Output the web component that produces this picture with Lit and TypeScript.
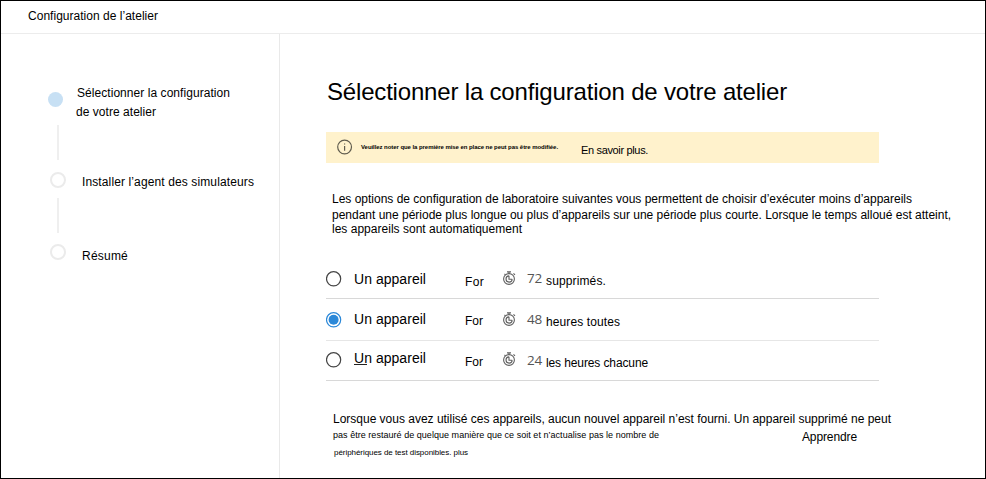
import { LitElement, html, css, svg } from "lit";
import { customElement, property, state } from "lit/decorators.js";
import { styleMap } from "lit/directives/style-map.js";

/** One line of text whose tracking is computed so that it spans `span` pixels. */
@customElement("text-line")
class TextLine extends LitElement {
  @property({ type: Number }) span = 0;
  @property() text = "";
  @state() private tracking = 0;

  static styles = css`
    :host { display: block; white-space: pre; }
    .line { display: inline-block; vertical-align: top; }
  `;

  firstUpdated() {
    const cs = getComputedStyle(this);
    const ctx = document.createElement("canvas").getContext("2d")!;
    ctx.font = `${cs.fontWeight} ${cs.fontSize} ${cs.fontFamily}`;
    const natural = ctx.measureText(this.text).width;
    if (this.span) this.tracking = (this.span - natural) / this.text.length;
  }

  render() {
    return html`<span class="line" style=${styleMap({ letterSpacing: `${this.tracking.toFixed(3)}px` })}>${this.text}</span>`;
  }
}

const stopwatch = svg`
  <path d="M4 .9h4M6 .9v2M10.5 2.4l1.5 1.5M1.5 2.8l1 1" />
  <circle cx="6" cy="8" r="5.4" />
  <path d="M6 4.8v3.4h3.2M9.2 8.2a3.1 3.1 0 1 1-3.2-3.3" />`;

interface Option {
  name: string; hours: string; unit: string; unitSpan: number; forSpan: number; checked?: boolean; cls: string;
}

const options: Option[] = [
  { name: "Un appareil", hours: "72", unit: "supprimés.", unitSpan: 60, forSpan: 19, cls: "first" },
  { name: "Un appareil", hours: "48", unit: "heures toutes", unitSpan: 74, forSpan: 18, checked: true, cls: "second" },
  { name: "Un appareil", hours: "24", unit: "les heures chacune", unitSpan: 102, forSpan: 18, cls: "third" },
];

@customElement("app-root")
class AppRoot extends LitElement {
  static styles = css`
    :host {
      display: block; box-sizing: border-box; width: 986px; height: 479px;
      border: 1px solid #000; background: #fff; color: #000; overflow: hidden;
      font: 12px/16px "Liberation Sans", Arial, sans-serif;
    }
    svg { display: block; fill: none; }
    header { box-sizing: border-box; height: 33px; padding: 7px 0 0 27px; border-bottom: 1px solid #ececec; }
    .body { display: flex; height: 444px; }
    nav { box-sizing: border-box; width: 279px; border-right: 1px solid #e9e9e9; padding: 50px 0 0 47px; }
    .step { display: flex; }
    .rail { display: flex; flex-direction: column; align-items: center; width: 20px; flex: none; }
    .dot { box-sizing: border-box; width: 16px; height: 16px; border-radius: 50%; border: 2px solid #ebebeb; }
    .dot.on { background: #c7e0f4; border: 0; width: 15px; height: 15px; margin: 8px 5px 0 0; }
    .link { width: 2px; height: 35px; background: #efefef; }
    .one { height: 88px; }
    .one .link { margin-top: 18px; }
    .one .label { margin: 1px 0 0 9px; }
    .one .label text-line + text-line { margin: 3px 0 0 -1px; }
    .two { height: 72px; }
    .two .link { margin-top: 10px; }
    .two .label { margin: 2px 0 0 14px; }
    .three .label { margin: 4px 0 0 14px; }
    main { padding: 44px 0 0 46px; width: 640px; }
    .title { font-size: 24px; line-height: 28px; margin-left: 1px; }
    .banner { box-sizing: border-box; display: flex; width: 553px; height: 31px; margin-top: 26px; padding-left: 11px; background: #fff2cc; }
    .info { margin-top: 7px; width: 16px; height: 16px; stroke: #605c4e; stroke-width: 1.2; }
    .note { font-size: 6px; font-weight: bold; line-height: 8px; margin: 11px 0 0 8px; width: 220px; }
    .more { font-size: 11px; margin-top: 10px; }
    .intro { margin: 28px 0 0 6px; }
    .intro .tight { margin-top: -2px; }
    .option { box-sizing: border-box; display: grid; grid-template-columns: 28px 111px 38px 24px 19px 1fr; width: 553px; border-bottom: 1px solid #d8d8d8; }
    .first { height: 41px; margin-top: 21px; }
    .second { height: 42px; border-color: #e6e6e6; }
    .third { height: 40px; }
    .radio { stroke: #444; stroke-width: 1.2; }
    .radio.checked { stroke: #2b88d8; }
    .core { fill: #2b88d8; stroke: none; }
    .watch { stroke: #606060; stroke-width: 1.1; }
    .name { font-size: 14px; }
    .hours { font: 13.5px/16px "Open Sans", "Noto Sans", sans-serif; color: #555; }
    .first .radio { margin-top: 13px; }
    .first .name { margin-top: 13px; }
    .first .for { margin-top: 16px; }
    .first .watch { margin-top: 13px; }
    .first .hours { margin-top: 12px; }
    .first .unit { margin-top: 15px; }
    .second .radio { margin-top: 13px; }
    .second .name { margin-top: 12px; }
    .second .for { margin-top: 14px; }
    .second .watch { margin-top: 13px; }
    .second .hours { margin-top: 12px; }
    .second .unit { margin-top: 15px; }
    .third .radio { margin-top: 11px; }
    .third .name { margin-top: 9px; }
    .third .for { margin-top: 13px; }
    .third .watch { margin-top: 11px; }
    .third .hours { margin-top: 11px; }
    .third .unit { margin-top: 14px; }
    .third .name .mark { width: 13px; height: 1px; background: #222; margin-top: -2px; }
    .outro { margin: 30px 0 0 7px; }
    .pair { display: flex; justify-content: space-between; width: 524px; height: 18px; }
    .small { font-size: 9px; }
    .apprendre { margin-top: 2px; }
    .tiny { font-size: 8px; margin-left: 1px; }
  `;

  private option(o: Option) {
    return html`
      <div class="option ${o.cls}">
        <svg class="radio ${o.checked ? "checked" : ""}" width="16" height="16">
          <circle cx="7.6" cy="7.8" r="7.1" />
          ${o.checked ? svg`<circle class="core" cx="7.6" cy="7.8" r="5" />` : ""}
        </svg>
        <div class="name"><text-line span="72" text=${o.name}></text-line>${o.cls === "third" ? html`<div class="mark"></div>` : ""}</div>
        <text-line class="for" span=${o.forSpan} text="For"></text-line>
        <svg class="watch" width="14" height="14">${stopwatch}</svg>
        <text-line class="hours" span="15" text=${o.hours}></text-line>
        <text-line class="unit" span=${o.unitSpan} text=${o.unit}></text-line>
      </div>`;
  }

  render() {
    return html`
      <header><text-line span="130" text="Configuration de l’atelier"></text-line></header>
      <div class="body">
        <nav>
          <div class="step one">
            <div class="rail"><div class="dot on"></div><div class="link"></div></div>
            <div class="label">
              <text-line span="153" text="Sélectionner la configuration"></text-line>
              <text-line span="80" text="de votre atelier"></text-line>
            </div>
          </div>
          <div class="step two">
            <div class="rail"><div class="dot"></div><div class="link"></div></div>
            <text-line class="label" span="172" text="Installer l’agent des simulateurs"></text-line>
          </div>
          <div class="step three">
            <div class="rail"><div class="dot"></div></div>
            <text-line class="label" span="46" text="Résumé"></text-line>
          </div>
        </nav>
        <main>
          <text-line class="title" span="460" text="Sélectionner la configuration de votre atelier"></text-line>
          <div class="banner">
            <svg class="info" viewBox="0 0 16 16"><circle cx="7.6" cy="8" r="6.9" /><path d="M7.6 7v4.7M7.6 4.4v1.2" /></svg>
            <text-line class="note" span="197" text="Veuillez noter que la première mise en place ne peut pas être modifiée."></text-line>
            <text-line class="more" span="67" text="En savoir plus."></text-line>
          </div>
          <div class="intro">
            <text-line span="580" text="Les options de configuration de laboratoire suivantes vous permettent de choisir d’exécuter moins d’appareils"></text-line>
            <text-line span="619" text="pendant une période plus longue ou plus d’appareils sur une période plus courte. Lorsque le temps alloué est atteint,"></text-line>
            <text-line class="tight" span="190" text="les appareils sont automatiquement"></text-line>
          </div>
          ${options.map((o) => this.option(o))}
          <div class="outro">
            <text-line span="558" text="Lorsque vous avez utilisé ces appareils, aucun nouvel appareil n’est fourni. Un appareil supprimé ne peut"></text-line>
            <div class="pair">
              <text-line class="small" span="326" text="pas être restauré de quelque manière que ce soit et n’actualise pas le nombre de"></text-line>
              <text-line class="apprendre" span="55" text="Apprendre"></text-line>
            </div>
            <text-line class="tiny" span="134" text="périphériques de test disponibles. plus"></text-line>
          </div>
        </main>
      </div>`;
  }
}
